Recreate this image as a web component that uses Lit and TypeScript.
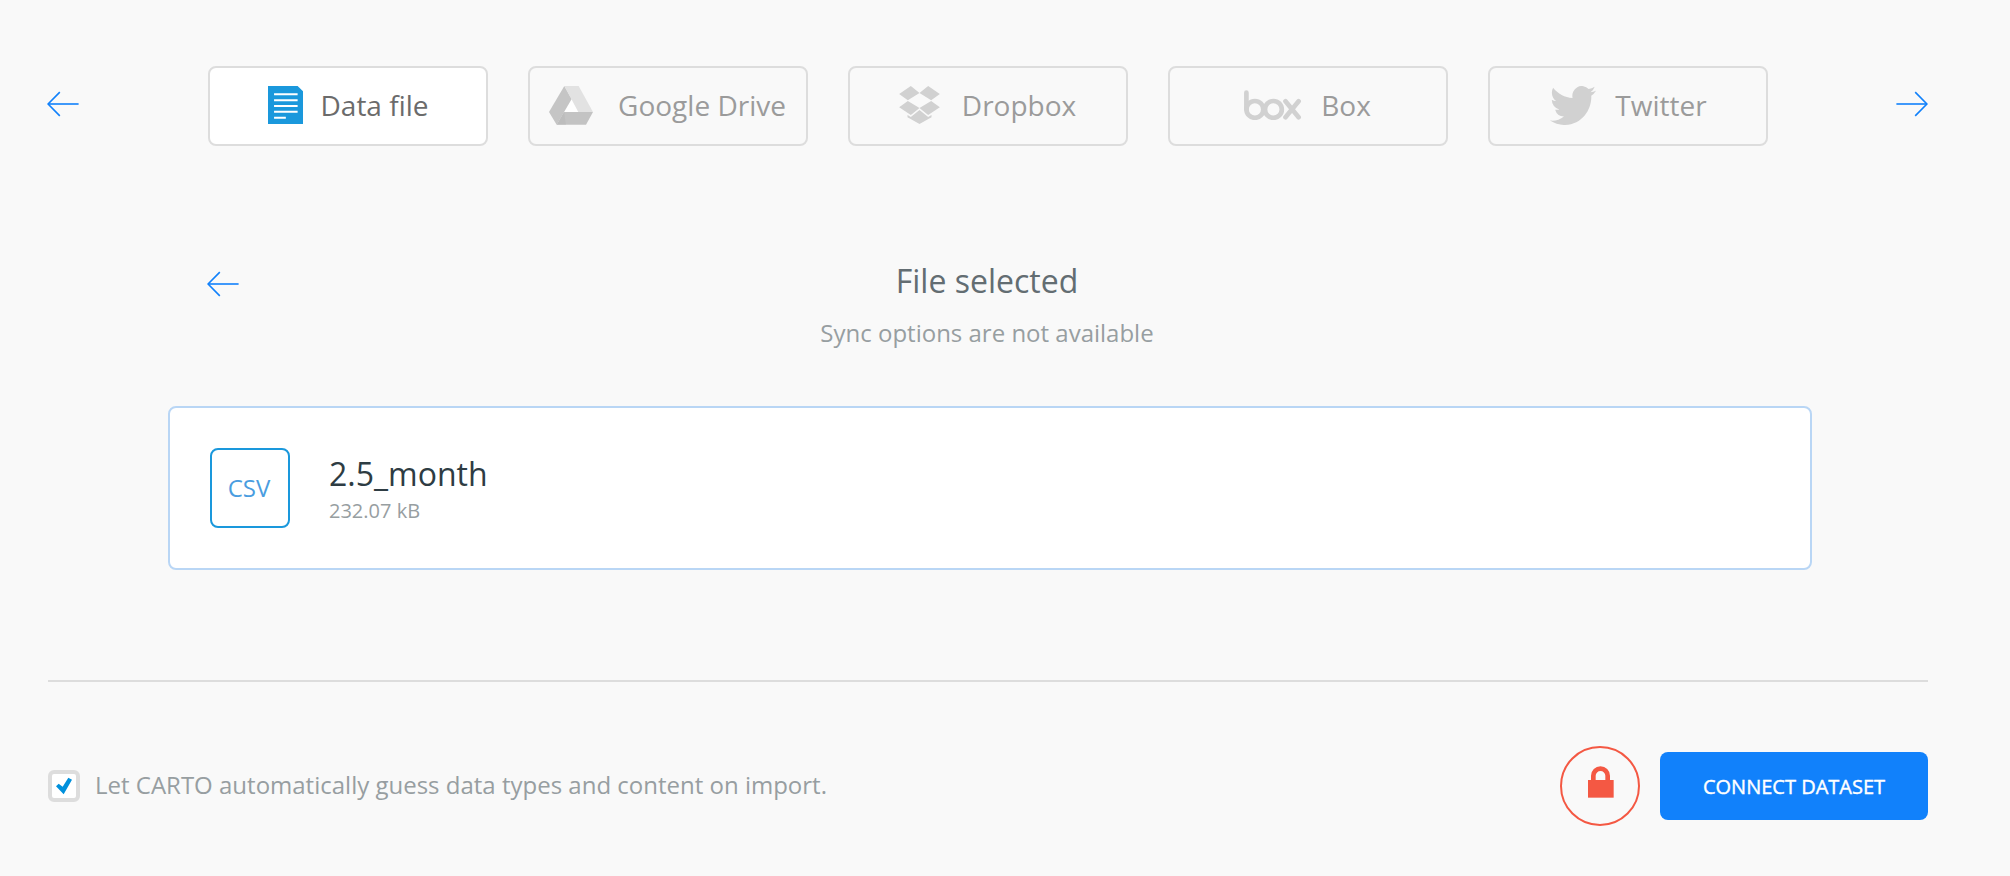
import { LitElement, html, css, svg } from "lit";
import { customElement, property } from "lit/decorators.js";

const leftArrow = svg`<polyline points="12.8,1.1 1.1,13 12.8,24.9"></polyline><line x1="1.1" y1="13" x2="31.6" y2="13"></line>`;

@customElement("arrow-icon")
class ArrowIcon extends LitElement {
  @property({ type: Boolean, reflect: true }) forward = false;
  static styles = css`
    :host { display: block; width: 32px; height: 26px; cursor: pointer; }
    :host([forward]) { transform: scaleX(-1); }
    .arrow { display: block; fill: none; stroke: #1181fb; stroke-width: 1.6; }
  `;
  render() {
    return html`<svg class="arrow" width="32" height="26" viewBox="0 0 32 26">${leftArrow}</svg>`;
  }
}

const icons = {
  file: html`<svg width="35" height="38" viewBox="712 108 104 114" preserveAspectRatio="none">
    <path fill="#1a98dc" d="M712 108H800L816 124V222H712Z"></path>
    <path fill="none" stroke="#fff" stroke-width="6" d="M730 133H800M730 150.5H800M730 168H800M730 185.5H800M730 203H765"></path></svg>`,
  drive: html`<svg width="44" height="39" viewBox="115 108 132 117">
    <path fill="#fff" d="M183 147L203 186H160Z"></path>
    <path fill="#c5c5c5" d="M161 108L183 147L138 224L115 186Z"></path>
    <path fill="#e2e2e2" d="M161 108H204L247 186H203Z"></path>
    <path fill="#c3c3c3" d="M160 186H247L226 224H138Z"></path>
    <path fill="#b6b6b6" d="M160 186L166 224H138Z" opacity=".45"></path></svg>`,
  dropbox: html`<svg width="41" height="38" viewBox="206 108 122 114">
    <path fill="#d1d1d1" d="M241 108L267 129L232 151L206 132ZM293 108L328 132L302 151L267 129ZM232 153L267 174L241 195L206 172ZM302 153L328 172L293 195L267 174ZM267 180L293 201L303 195V202L267 222L231 202V195L241 201Z"></path></svg>`,
  box: html`<svg width="58" height="30" viewBox="0 0 58 30">
    <g fill="none" stroke="#d1d1d1" stroke-width="4.7" stroke-linecap="round">
      <path d="M2.4 2.7V19.4"></path><circle cx="10.9" cy="19.4" r="8.4"></circle>
      <circle cx="29.4" cy="19.4" r="8.4"></circle><path d="M41.5 11.3L54.6 27.2M54.6 11.3L41.5 27.2"></path></g></svg>`,
  twitter: html`<svg width="46" height="39" viewBox="0 2.25 24 19.5" preserveAspectRatio="none">
    <path fill="#d1d1d1" d="M23.953 4.57a10 10 0 01-2.825.775 4.958 4.958 0 002.163-2.723c-.951.555-2.005.959-3.127 1.184a4.92 4.92 0 00-8.384 4.482C7.69 8.095 4.067 6.13 1.64 3.162a4.822 4.822 0 00-.666 2.475c0 1.71.87 3.213 2.188 4.096a4.904 4.904 0 01-2.228-.616v.06a4.923 4.923 0 003.946 4.827 4.996 4.996 0 01-2.212.085 4.936 4.936 0 004.604 3.417 9.867 9.867 0 01-6.102 2.105c-.39 0-.779-.023-1.17-.067a13.995 13.995 0 007.557 2.209c9.053 0 13.998-7.496 13.998-13.985 0-.21 0-.42-.015-.63A9.935 9.935 0 0024 4.59z"></path></svg>`,
};

@customElement("source-tab")
class SourceTab extends LitElement {
  @property() icon: keyof typeof icons = "file";
  @property() label = "";
  @property({ type: Boolean, reflect: true }) active = false;
  static styles = css`
    :host { display: block; }
    .tab { box-sizing: border-box; width: 280px; height: 80px; display: flex; align-items: center;
      justify-content: center; padding-bottom: 2px; border: 2px solid #ddd; border-radius: 8px; color: #9b9b9b;
      font: 400 28px/40px "Open Sans", sans-serif; cursor: pointer; white-space: nowrap; }
    :host([active]) .tab { background: #fff; color: #6b6b6b; }
    .icon { display: flex; margin-right: 18px; }
    .file { margin-left: 1px; }
    .drive { margin-right: 25px; }
    .dropbox { margin-right: 22px; }
    .box { margin-right: 19px; }
    .twitter { margin: 0 19px 0 2px; }
    .icon svg { display: block; }
  `;
  render() {
    return html`<div class="tab"><span class="icon ${this.icon}">${icons[this.icon]}</span><span>${this.label}</span></div>`;
  }
}

@customElement("app-root")
class AppRoot extends LitElement {
  static styles = css`
    :host { display: block; box-sizing: border-box; height: 876px; padding: 66px 82px 0 47px;
      background: #f9f9f9; font-family: "Open Sans", sans-serif; color: #979ea1; }
    .sources { display: flex; justify-content: space-between; height: 80px; }
    .nav { margin-top: 24.5px; }
    .tabs { display: flex; gap: 40px; }
    .selection { display: flex; flex-direction: column; margin: 112px 116px 0 121px; }
    .heading { display: grid; grid-template-columns: 39px 1fr 39px; padding: 0 6px 0 0; height: 91px; }
    .back { margin: 12.5px 0 0 38.5px; }
    .titles { display: flex; flex-direction: column; align-items: center; gap: 14px; padding-top: 1px; }
    .title { margin: 0; font-size: 32px; line-height: 44px; font-weight: 400; color: #636d72; }
    .subtitle { margin: 0; font-size: 24px; line-height: 32px; }
    .file { box-sizing: border-box; display: flex; align-items: center; gap: 39px; height: 164px; margin-top: 57px;
      padding: 0 40px; border: 2px solid #b9d6f5; border-radius: 8px; background: #fff; }
    .type { box-sizing: border-box; width: 80px; height: 80px; display: grid; place-items: center; padding: 0 2px 2px 0;
      border: 2px solid #1a98dc; border-radius: 8px; color: #4a9de0; font-size: 24px; }
    .info { padding-top: 2px; }
    .name { font-size: 32px; line-height: 40px; color: #2e3c43; }
    .size { font-size: 20px; line-height: 28px; margin-top: 3px; }
    .footer { display: flex; align-items: center; justify-content: space-between; margin: 110px 0 0 1px;
      border-top: 2px solid #ddd; padding-top: 64px; height: 80px; }
    .guess { display: flex; align-items: center; gap: 15px; font-size: 24px; line-height: 32px; }
    .guess-label { padding-bottom: 2px; }
    .check { box-sizing: border-box; width: 32px; height: 32px; border: 4px solid #ddd; border-radius: 6px; background: #fff; }
    .check svg { display: block; }
    .actions { display: flex; align-items: center; gap: 20px; }
    .privacy { display: block; }
    .connect { width: 268px; height: 68px; padding: 2px 0 0; border: 0; border-radius: 8px; background: #1181fb; color: #fff;
      font: 500 20px/28px "Open Sans", sans-serif; -webkit-text-stroke: 0.4px #fff; }
  `;
  render() {
    return html`
      <div class="sources">
        <arrow-icon class="nav"></arrow-icon>
        <div class="tabs">
          <source-tab icon="file" label="Data file" active></source-tab>
          <source-tab icon="drive" label="Google Drive"></source-tab>
          <source-tab icon="dropbox" label="Dropbox"></source-tab>
          <source-tab icon="box" label="Box"></source-tab>
          <source-tab icon="twitter" label="Twitter"></source-tab>
        </div>
        <arrow-icon class="nav" forward></arrow-icon>
      </div>
      <div class="selection">
        <div class="heading">
          <arrow-icon class="back"></arrow-icon>
          <div class="titles">
            <h3 class="title">File selected</h3>
            <p class="subtitle">Sync options are not available</p>
          </div>
        </div>
        <div class="file">
          <div class="type">CSV</div>
          <div class="info">
            <div class="name">2.5_month</div>
            <div class="size">232.07 kB</div>
          </div>
        </div>
      </div>
      <div class="footer">
        <div class="guess">
          <span class="check"><svg width="24" height="24" viewBox="66 342 72 72">
            <path fill="#0090dc" d="M78 379L86 371L98 380L115 353L126 359L101 403Z"></path></svg></span>
          <span class="guess-label">Let CARTO automatically guess data types and content on import.</span>
        </div>
        <div class="actions">
          <svg class="privacy" width="80" height="80" viewBox="60 258 240 240">
            <circle cx="180" cy="378" r="117" fill="none" stroke="#f45843" stroke-width="6"></circle>
            <path fill="#f45843" d="M144 360H221V413H144Z"></path>
            <path fill="none" stroke="#f45843" stroke-width="14" d="M160 362V347.5A21.5 21.5 0 0 1 203 347.5V362"></path>
          </svg>
          <button class="connect">CONNECT DATASET</button>
        </div>
      </div>`;
  }
}
